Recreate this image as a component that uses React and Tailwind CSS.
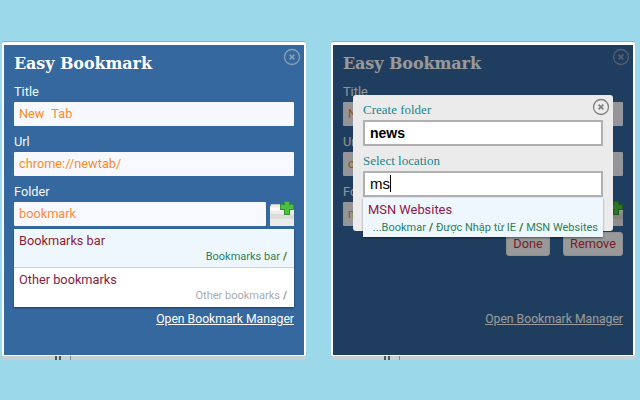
const sans = "font-['Roboto',sans-serif]"

// Round close button
const CloseIcon = ({ className }) => (
  <svg viewBox="0 0 18 18" className={className} fill="none">
    <circle cx="9" cy="9" r="7.5" stroke="currentColor" strokeWidth="1.3" />
    <path d="M6.6 6.6l4.8 4.8M11.4 6.6l-4.8 4.8" stroke="currentColor" strokeWidth="1.6" />
  </svg>
)

const FolderAdd = () => (
  <svg viewBox="0 0 24 25" className="w-6 h-[25px] shrink-0 mt-[-1px]">
    <path d="M0 25V5l2-2h13v6h9v16z" fill="#e9ecea" />
    <path d="M0 8h24" stroke="#fff" strokeWidth="3" />
    <path d="M0 13h24v5H0z" fill="#d9dcd9" />
    <path d="M1 3.500h14" stroke="#c4c8c4" />
    <path d="M14 0h6v3h4v6h-4v5h-6V9h-4V3h4z" fill="#2c962c" />
    <path d="M15 1h4v3h4v4h-4v5h-4V8h-4V4h4z" fill="#4cc03e" />
  </svg>
)

const Field = ({ label, value }) => (
  <div>
    <div className={`${sans} text-[12.75px] leading-[18px] text-[#f4f8fc] h-[18px]`}>{label}</div>
    <div className={`${sans} mt-[1px] h-6 bg-[#f8f9ff] rounded-[1px] pl-[5px] text-[12.75px] [word-spacing:4px] leading-6 text-[#ff8a1e]`}>{value}</div>
  </div>
)

const Sep = () => <span className="font-bold text-[#4a6a20] mx-[3px]">/</span>

const Panel = ({ folder, children, foot }) => (
  <div className="relative w-[304px] h-[314px] shrink-0 bg-white rounded-[2px] px-[2px] pt-[3px] pb-[1px] shadow-[0_4px_0_#c6d0d4,0_-1px_0_#a8a8a8]">
    <div className="relative h-full bg-[#34689f] pt-[7px] px-[10px] overflow-hidden">
      <h1 className="font-['DejaVu_Serif',serif] font-bold text-[16px] leading-6 tracking-[-0.1px] text-white">Easy Bookmark</h1>
      <CloseIcon className="absolute right-[3px] top-[3px] w-[18px] h-[18px] text-[#8d9fb0]" />
      <div className="mt-[7px] flex flex-col gap-[7px]">
        <Field label="Title" value="New Tab" />
        <Field label="Url" value="chrome://newtab/" />
        <div>
          <div className={`${sans} text-[12.75px] leading-[18px] text-[#f4f8fc] h-[18px]`}>Folder</div>
          <div className="mt-[1px] flex gap-1">
            <div className={`${sans} flex-1 h-6 bg-[#f8f9ff] rounded-[1px] pl-[5px] text-[12.75px] leading-6 text-[#ff8a3a]`}>{folder}</div>
            <FolderAdd />
          </div>
        </div>
      </div>
      {children}
      <div className="absolute right-[10px] top-[265px]">
        <a className={`${sans} text-[12.2px] leading-[18px] text-white underline block`}>Open Bookmark Manager</a>
      </div>
      {foot}
    </div>
    {/* bits of the page peeking out under the popup */}
    <div className="absolute left-[53px] bottom-[-4px] w-[2px] h-1 bg-[#555]" />
    <div className="absolute left-[57px] bottom-[-4px] w-[2px] h-1 bg-[#555]" />
    <div className="absolute left-[68px] bottom-[-4px] w-px h-1 bg-[#888]" />
  </div>
)

const FolderList = () => (
  <div className={`${sans} mt-[3px] bg-white shadow-[0_1px_2px_rgba(0,0,0,0.4)] text-[12.75px]`}>
    <div className="h-[39px] bg-[#eff7fe] border-b border-[#ccd2d8] px-[5px]">
      <div className="text-[#8f1c2f] leading-[23px]">Bookmarks bar</div>
      <div className="text-right text-[11px] leading-[14px] text-[#2c7f58] mr-[-1px] mt-[-2px]">Bookmarks bar<Sep /></div>
    </div>
    <div className="h-[39px] px-[5px]">
      <div className="text-[#8b1a45] leading-[23px]">Other bookmarks</div>
      <div className="text-right text-[11px] leading-[14px] text-[#a9adb0] mr-[-1px] mt-[-2px]">Other bookmarks<span className="font-bold text-[#999] mx-[3px]">/</span></div>
    </div>
  </div>
)

const Actions = () => (
  <div className={`${sans} mt-[6px] flex justify-end gap-[13px] text-[12.75px]`}>
    <button className="w-11 h-6 rounded-[3px] bg-white border border-[#eee] text-[#c8323c] leading-5">Done</button>
    <button className="w-[60px] h-6 rounded-[3px] bg-white border border-[#eee] text-[#c8323c] leading-5">Remove</button>
  </div>
)

const CreateFolder = () => (
  <div className="absolute left-[20px] top-[50px] w-[260px] h-[136px] bg-[#ebebeb] rounded-[3px] px-[10px] pt-[5px]">
    <div className="font-['Liberation_Serif',serif] text-[13px] leading-5 text-[#17868f]">Create folder</div>
    <div className="h-[26px] bg-white border-2 border-[#b0b0b0] pl-[5px] font-['Liberation_Sans',sans-serif] font-bold text-[14px] leading-[22px] text-black">news</div>
    <div className="mt-[5px] font-['Liberation_Serif',serif] text-[13px] leading-5 text-[#17868f]">Select location</div>
    <div className="h-[26px] bg-white border-2 border-[#b0b0b0] pl-[5px] font-['Liberation_Sans',sans-serif] text-[15px] leading-[22px] text-black">
      ms<span className="inline-block w-px h-[17px] bg-black align-[-3px]" />
    </div>
    <CloseIcon className="absolute right-[3px] top-[3px] w-[18px] h-[18px] text-[#7f7f7f]" />
    <div className={`${sans} absolute left-[10px] top-[103px] w-60 h-[39px] bg-[#eff7fe] shadow-[0_1px_2px_rgba(0,0,0,0.45)] px-[5px]`}>
      <div className="text-[12.9px] leading-[23px] text-[#8b1a45]">MSN Websites</div>
      <div className="text-right text-[11px] leading-[14px] text-[#2c7f58] whitespace-nowrap">
        ...Bookmar<Sep />Được Nhập từ IE<Sep />MSN Websites
      </div>
    </div>
  </div>
)

const App = () => {
  return (
    <div className="w-[640px] h-[400px] bg-[#9bd9ea] overflow-hidden flex items-start gap-[25px] pt-[42px] pl-[2px]">
      <Panel folder="bookmark">
        <FolderList />
      </Panel>
      <Panel
        folder="news"
        foot={
          <>
            <div className="absolute inset-0 bg-black/40" />
            <CreateFolder />
          </>
        }
      >
        <Actions />
      </Panel>
    </div>
  )
}

export default App
